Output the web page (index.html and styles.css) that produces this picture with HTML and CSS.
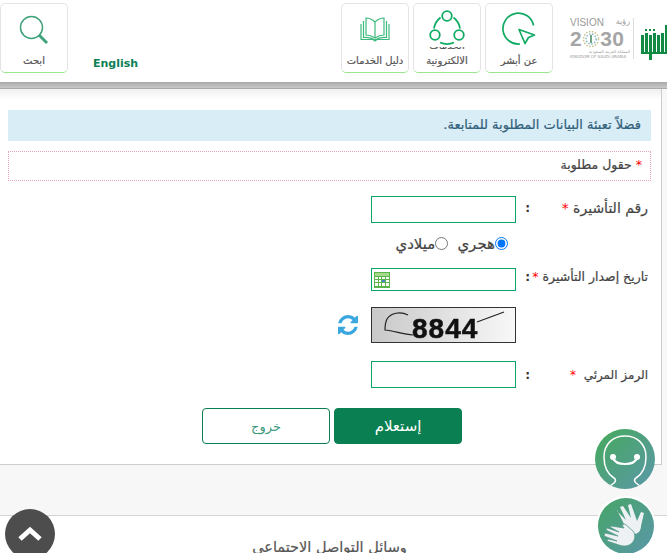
FILE: index.html
```html
<!DOCTYPE html>
<html lang="ar" dir="rtl">
<head>
    <meta charset="UTF-8">
    <meta name="viewport" content="width=device-width, initial-scale=1.0">
    <title>استعلام عن صلاحية تأشيرة</title>
    <link rel="stylesheet" href="styles.css">
</head>
<body>

    <header class="topbar">
        <div class="logo">
            <svg class="logo-bars" width="26" height="36" viewBox="0 0 26 36">
                <g fill="#118a43">
                    <rect x="0" y="11" width="3" height="19"/>
                    <rect x="4" y="9" width="3" height="21"/>
                    <rect x="8" y="11" width="3" height="25"/>
                    <rect x="12" y="9" width="3" height="21"/>
                    <rect x="16" y="11" width="3" height="19"/>
                    <rect x="20" y="9" width="3" height="21"/>
                    <rect x="24" y="1" width="3" height="29"/>
                    <rect x="0" y="28" width="26" height="2"/>
                    <rect x="4" y="5" width="2" height="2"/>
                    <rect x="8" y="5" width="2" height="2"/>
                    <rect x="12" y="5" width="2" height="2"/>
                </g>
            </svg>
            <div class="vision">
                <div class="vision-top" dir="ltr"><span>VISION</span><span class="vision-ar">رؤية</span></div>
                <div class="vision-num" dir="ltr">2<svg width="18" height="18" viewBox="0 0 18 18"><g fill="none" stroke-width="1.500" stroke-dasharray="1.500 1.500"><circle cx="9" cy="9" r="7.500" stroke="#c9c08a"/><circle cx="9" cy="9" r="5" stroke="#7fb6c9"/></g><rect x="8" y="5" width="2" height="8" fill="#6fa486"/></svg>30</div>
                <div class="vision-sub">المملكة العربية السعودية</div>
                <div class="vision-sub" dir="ltr">KINGDOM OF SAUDI ARABIA</div>
            </div>
        </div>

        <a class="tile">
            <svg class="tile-icon" width="34" height="34" viewBox="0 0 34 34" fill="none" stroke="#12ab64" stroke-width="1.700">
                <path d="M31.600 13.500A15.500 15.500 0 1 0 18 32"/>
                <path d="M17 17.500l15.500 5.500-6 2.500-3.500 6z" stroke-linejoin="round"/>
            </svg>
            <span class="tile-label">عن أبشر</span>
        </a>
        <a class="tile tile-clip">
            <span class="tile-label tile-label-hidden">الخدمات</span>
            <svg class="tile-icon" width="36" height="37" viewBox="0 0 36 37" fill="none" stroke="#12ab64" stroke-width="1.800">
                <circle cx="18" cy="6" r="4.800"/>
                <circle cx="6" cy="25" r="4.800"/>
                <circle cx="30" cy="25" r="4.800"/>
                <path d="M11.500 7.500a17 17 0 0 0-6.500 11M24.500 7.500a17 17 0 0 1 6.500 11M11 32.500a17 17 0 0 0 14 0"/>
            </svg>
            <span class="tile-label">الالكترونية</span>
        </a>
        <a class="tile tile-book">
            <svg class="tile-icon" width="30" height="25" viewBox="0 0 30 25" fill="none" stroke="#3dbb7f" stroke-width="1.200">
                <path d="M15 5C12 2 9 1 6 1v17c3 0 6 1 9 3 3-2 6-3 9-3V1c-3 0-6 1-9 4zM15 5v16"/>
                <path d="M3.500 4v16.500c4-.5 8 0 11.500 2.500 3.500-2.500 7.500-3 11.500-2.500V4"/>
                <path d="M1 7v15.500h12l2 1.500 2-1.500h12V7"/>
            </svg>
            <span class="tile-label">دليل الخدمات</span>
        </a>

        <a class="lang">English</a>

        <a class="tile tile-search">
            <svg class="tile-icon" width="30" height="30" viewBox="0 0 30 30" fill="none" stroke="#3fa27a">
                <circle cx="12.500" cy="12.500" r="11" stroke-width="1.500"/>
                <path d="M20 20l8 8" stroke-width="3"/>
            </svg>
            <span class="tile-label">ابحث</span>
        </a>
    </header>
    <div class="header-shade"></div>

    <main class="panel">
        <div class="notice">فضلاً تعبئة البيانات المطلوبة للمتابعة.</div>
        <div class="required"><span class="star">*</span> حقول مطلوبة</div>

        <form class="visa-form">
            <div class="row row-first">
                <label class="field-label field-big">رقم التأشيرة <span class="star">*</span></label>
                <span class="colon">:</span>
                <input class="field" type="text">
            </div>

            <div class="radios">
                <label class="radio"><input type="radio" name="cal" checked>هجري</label>
                <label class="radio"><input type="radio" name="cal">ميلادي</label>
            </div>

            <div class="row row-date">
                <label class="field-label">تاريخ إصدار التأشيرة <span class="star">*</span></label>
                <span class="colon">:</span>
                <div class="field field-date">
                    <svg width="16" height="16" viewBox="0 0 16 16">
                        <rect width="16" height="16" fill="#5cb54a"/>
                        <rect x="1" y="1" width="14" height="3" fill="#a5d98c"/>
                        <g fill="#fff">
                            <rect x="1" y="5" width="3" height="2"/><rect x="5" y="5" width="2" height="2"/><rect x="8" y="5" width="3" height="2"/><rect x="12" y="5" width="3" height="2"/>
                            <rect x="1" y="8" width="3" height="2"/><rect x="5" y="8" width="2" height="2"/><rect x="12" y="8" width="3" height="2"/>
                            <rect x="1" y="11" width="3" height="3"/><rect x="5" y="11" width="2" height="3"/><rect x="8" y="11" width="3" height="3"/><rect x="12" y="11" width="3" height="3"/>
                        </g>
                        <rect x="8" y="8" width="3" height="2" fill="#4a7fd0"/>
                    </svg>
                </div>
            </div>

            <div class="row row-captcha">
                <span class="field-label"></span>
                <span class="colon"></span>
                <div class="captcha" dir="ltr">
                    <span class="captcha-text">8844</span>
                    <svg class="captcha-lines" width="143" height="34" viewBox="0 0 143 34" fill="none" stroke="#222" stroke-width="1.200">
                        <path d="M36 7C28 3 19 5 15 11 13 15 13 19 13 22c9 1 18 4 28 5"/>
                        <path d="M105 14l27-10"/>
                    </svg>
                </div>
                <svg class="refresh" width="20" height="20" viewBox="0 0 1536 1536">
                    <path fill="#3aa7df" d="M1511 928q0 5-1 7-64 268-268 434.500t-478 166.500q-146 0-282.500-55t-243.500-157l-129 129q-19 19-45 19t-45-19-19-45v-448q0-26 19-45t45-19h448q26 0 45 19t19 45-19 45l-137 137q71 66 161 102t187 36q134 0 250-65t186-179q11-17 53-117 8-23 30-23h192q13 0 22.500 9.500t9.500 22.500zm25-800v448q0 26-19 45t-45 19h-448q-26 0-45-19t-19-45 19-45l138-138q-148-137-349-137-134 0-250 65t-186 179q-11 17-53 117-8 23-30 23h-199q-13 0-22.500-9.500t-9.500-22.500v-7q65-268 270-434.500t480-166.500q146 0 284 55.500t245 156.500l130-129q19-19 45-19t45 19 19 45z"/>
                </svg>
            </div>

            <div class="row row-code">
                <label class="field-label">الرمز المرئي &nbsp;<span class="star">*</span></label>
                <span class="colon">:</span>
                <input class="field" type="text">
            </div>

            <div class="actions">
                <button class="btn btn-primary" type="button">إستعلام</button>
                <button class="btn btn-outline" type="button">خروج</button>
            </div>
        </form>
    </main>

    <div class="grey-strip"></div>

    <footer class="social">
        <h4>وسائل التواصل الاجتماعي</h4>
    </footer>

    <a class="fab fab-chat">
        <svg width="60" height="60" viewBox="0 0 60 60" fill="none" stroke="#fff">
            <path d="M15 57l4-3c2-2 2-4 0-5C11 44 9 36 9 28 9 15 18 7 30 7s21 8 21 21c0 8-2 16-10 21-2 1-2 3 0 5l4 3" stroke-width="1.500"/>
            <path d="M18 29c3 8 21 8 24 0" stroke-width="2.200"/>
            <circle cx="18" cy="28" r="3" fill="#fff" stroke="none"/>
            <circle cx="42" cy="28" r="3" fill="#fff" stroke="none"/>
        </svg>
    </a>
    <a class="fab fab-hands">
        <svg width="56" height="56" viewBox="0 0 56 56" fill="#eef1f4">
            <path d="M19 13l9 9-6-13 3-1 8 12-3-13 3-1 5 14 1 3 4-9 3 1-3 13c0 5-3 8-7 8l-7-4-10-20z"/>
            <path d="M13 28l13 2-2-3 3-1 8 7c3 4 2 9-1 12-3 3-8 4-13 2L9 43l1-2 9 2-13-5 1-3 13 3-12-6 1-2 12 4-9-5z" stroke="#5a9c8a" stroke-width=".8"/>
        </svg>
    </a>
    <a class="fab fab-top">
        <svg width="24" height="16" viewBox="0 0 24 16" fill="none" stroke="#fff" stroke-width="5">
            <path d="M2 13L12 4l10 9"/>
        </svg>
    </a>

</body>
</html>
```

FILE: styles.css
```css
html, body {
    height: 100%;
    overflow: hidden;
}
body {
    margin: 0;
    background: #f7f7f7;
    font-family: "DejaVu Sans", sans-serif;
    color: #333;
    position: relative;
}

/* top bar */
.topbar {
    height: 82px;
    box-sizing: border-box;
    background: #fff;
    display: flex;
    align-items: flex-start;
    padding-top: 3px;
    gap: 4px;
    overflow: hidden;
}
.logo {
    width: 110px;
    height: 70px;
    display: flex;
    align-items: flex-start;
    gap: 7px;
    flex-shrink: 0;
}
.logo-bars {
    flex-shrink: 0;
    margin-top: 21px;
}
.vision {
    width: 60px;
    flex-shrink: 0;
    margin-top: 15px;
    padding-right: 3px;
    border-right: 1px solid #ddd;
    color: #9a9a9a;
    line-height: 1;
}
.vision-top {
    display: flex;
    justify-content: space-between;
    font-family: "Liberation Sans", sans-serif;
    font-size: 10px;
    height: 10px;
}
.vision-ar {
    font-family: "DejaVu Sans", sans-serif;
    font-size: 8px;
}
.vision-num {
    font-family: "Liberation Sans", sans-serif;
    font-size: 21px;
    font-weight: bold;
    letter-spacing: .5px;
    color: #a5a5a5;
    display: flex;
    align-items: center;
    height: 21px;
}
.vision-sub {
    font-size: 4px;
    margin-top: 1px;
    white-space: nowrap;
    overflow: hidden;
}
.tile {
    width: 68px;
    height: 70px;
    box-sizing: border-box;
    border: 1px solid #e4e4e4;
    border-bottom: 1px solid #9be58f;
    border-radius: 5px;
    background: #fff;
    display: flex;
    flex-direction: column;
    align-items: center;
    padding-top: 8px;
    position: relative;
    flex-shrink: 0;
    overflow: hidden;
}
.tile-icon {
    flex-shrink: 0;
}
.tile-label {
    font-size: 10px;
    color: #555;
    position: absolute;
    bottom: 6px;
    white-space: nowrap;
    -webkit-text-stroke: .2px #555;
}
.tile-clip {
    padding-top: 6px;
}
.tile-clip .tile-label-hidden {
    bottom: 21px;
}
.tile-clip .tile-icon {
    position: relative;
    background: #fff;
}
.tile-book {
    padding-top: 13px;
}
.lang {
    width: 265px;
    box-sizing: border-box;
    margin-top: 54px;
    padding-left: 21px;
    text-align: left;
    font-size: 11px;
    font-weight: bold;
    color: #0c7f54;
    flex-shrink: 0;
}
.tile-search .tile-icon {
    margin-top: 3px;
}
.header-shade {
    height: 7px;
    box-sizing: border-box;
    background: linear-gradient(#a9a9a9, #c9c9c9);
    border-bottom: 1px solid #ababab;
}

/* main panel */
.panel {
    width: 662px;
    height: 376px;
    margin-right: 5px;
    box-sizing: border-box;
    background: linear-gradient(#f0f0f0, #fff 11px);
    border-right: 1px solid #ccc;
    border-bottom: 1px solid #ccc;
    padding: 21px 10px 0 8px;
}
.notice {
    height: 31px;
    box-sizing: border-box;
    background: #d9edf7;
    color: #31607a;
    font-size: 13px;
    line-height: 30px;
    padding-right: 10px;
    -webkit-text-stroke: .2px #31607a;
}
.required {
    height: 30px;
    box-sizing: border-box;
    margin-top: 10px;
    border: 1px dotted #e8a8b8;
    font-size: 12.500px;
    line-height: 26px;
    padding-right: 8px;
    color: #444;
    -webkit-text-stroke: .2px #444;
}
.star {
    color: #f00;
    -webkit-text-stroke: 0;
}
.visa-form {
    padding-right: 3px;
}
.row {
    display: flex;
    align-items: center;
}
.row-first {
    margin-top: 15px;
}
.row-first .field-label, .row-first .colon {
    margin-bottom: 3px;
}
.field-label {
    width: 118px;
    flex-shrink: 0;
    font-size: 12px;
    color: #444;
    white-space: nowrap;
    -webkit-text-stroke: .2px #444;
}
.field-big {
    font-size: 14px;
}
.row-date .field-label {
    font-size: 12.500px;
    margin-bottom: 6px;
}
.row-date .colon {
    margin-bottom: 6px;
}
.colon {
    width: 14px;
    flex-shrink: 0;
    font-weight: bold;
    font-size: 12px;
}
.field {
    width: 145px;
    height: 27px;
    box-sizing: border-box;
    border: 1px solid #0ca366;
    background: #fff;
    margin: 0;
    padding: 0;
}
.radios {
    display: flex;
    gap: 9px;
    margin-top: 10px;
    padding-right: 140px;
    height: 21px;
    align-items: center;
}
.radio {
    font-size: 15px;
    color: #444;
    display: flex;
    align-items: center;
    -webkit-text-stroke: .2px #444;
}
.radio input {
    margin: 0;
    width: 13px;
    height: 13px;
}
.row-date {
    margin-top: 14px;
}
.field-date {
    height: 23px;
    display: flex;
    align-items: center;
    justify-content: flex-end;
    padding-left: 2px;
}
.row-captcha {
    margin-top: 16px;
}
.captcha {
    width: 145px;
    height: 36px;
    box-sizing: border-box;
    border: 1px solid #333;
    background: linear-gradient(90deg, #c8c8c8, #f8f8f8);
    position: relative;
    overflow: hidden;
    padding-left: 40px;
}
.captcha-lines {
    position: absolute;
    top: 0;
    left: 0;
}
.captcha-text {
    font-family: "Liberation Sans", sans-serif;
    font-size: 28px;
    font-weight: bold;
    line-height: 41px;
    letter-spacing: 1px;
    color: #111;
    -webkit-text-stroke: .5px #111;
    filter: blur(.5px);
    display: block;
}
.refresh {
    margin-right: 13px;
}
.row-code {
    margin-top: 18px;
}
.actions {
    display: flex;
    gap: 4px;
    margin-top: 20px;
    padding-right: 186px;
}
.btn {
    width: 128px;
    height: 36px;
    border-radius: 4px;
    border: 1px solid #0a8052;
    font-family: "DejaVu Sans", sans-serif;
    padding: 0;
}
.btn-primary {
    background: #0a8052;
    color: #fff;
    font-size: 15px;
}
.btn-outline {
    background: #fff;
    color: #3a9a7a;
    font-size: 13px;
}

.grey-strip {
    height: 50px;
    border-bottom: 1px solid #d4d4d4;
}
.social {
    background: #fff;
    height: 60px;
    text-align: center;
}
.social h4 {
    margin: 0;
    padding-top: 23px;
    padding-right: 8px;
    font-size: 14.500px;
    font-weight: normal;
    color: #555;
    -webkit-text-stroke: .2px #555;
}

/* floating buttons */
.fab {
    position: absolute;
    border-radius: 50%;
    display: flex;
    align-items: center;
    justify-content: center;
    overflow: hidden;
}
.fab-chat {
    width: 60px;
    height: 60px;
    left: 595px;
    top: 429px;
    background: linear-gradient(135deg, #45aa5a, #5b97aa);
}
.fab-hands {
    width: 56px;
    height: 56px;
    left: 598px;
    top: 498px;
    background: linear-gradient(135deg, #45a566, #5b97aa);
    box-shadow: 0 0 0 2px #fff;
}
.fab-top {
    width: 50px;
    height: 50px;
    left: 5px;
    top: 509px;
    background: #4d4d4d;
}
```
